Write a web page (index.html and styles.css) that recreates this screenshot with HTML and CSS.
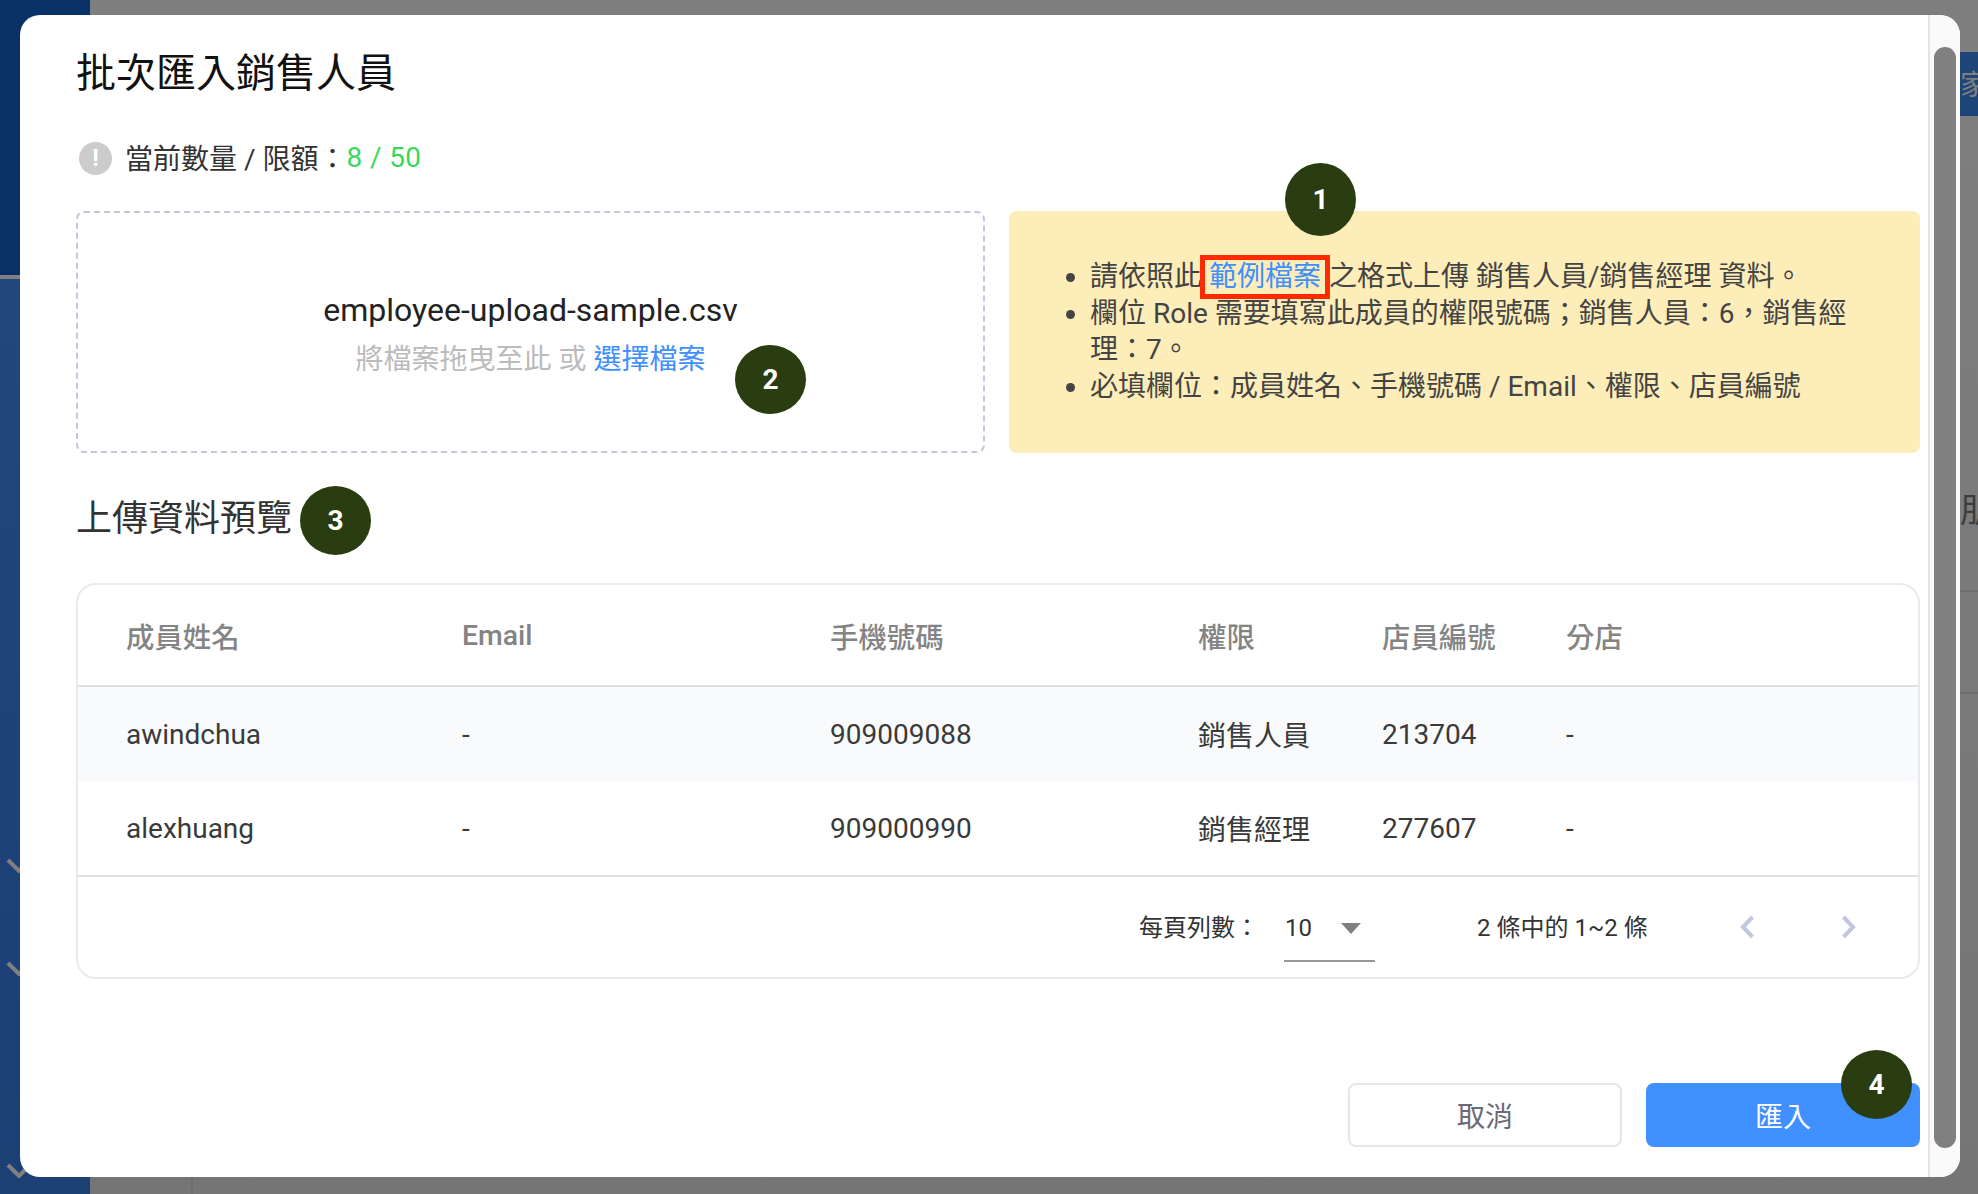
FILE: index.html
```html
<!DOCTYPE html>
<html lang="zh-Hant">
<head>
<meta charset="utf-8">
<title>批次匯入銷售人員</title>
<link rel="stylesheet" href="styles.css">
</head>
<body>
<div class="backdrop">
  <aside class="side">
    <div class="side-top"></div>
    <div class="side-bottom">
      <svg class="side-chev" viewBox="0 0 26 15"><path d="M2 2l11 11 11-11"/></svg>
      <svg class="side-chev" viewBox="0 0 26 15"><path d="M2 2l11 11 11-11"/></svg>
      <svg class="side-chev" viewBox="0 0 26 15"><path d="M2 2l11 11 11-11"/></svg>
    </div>
  </aside>
  <main class="page">
    <div class="page-nav"></div>
    <div class="page-content">
      <div class="page-tag">家</div>
      <div class="page-word">朋</div>
      <div class="page-rule"></div>
      <div class="page-rule"></div>
    </div>
  </main>
</div>

<section class="modal">
  <div class="modal-body">
    <h1 class="title">批次匯入銷售人員</h1>
    <div class="quota">
      <span class="quota-icon">!</span>
      <span>當前數量 / 限額：</span><span class="quota-num">8 / 50</span>
    </div>
    <div class="upload-row">
      <div class="drop">
        <div class="drop-file">employee-upload-sample.csv</div>
        <div class="drop-hint">將檔案拖曳至此 或 <a class="link">選擇檔案</a></div>
      </div>
      <div class="notes">
        <ul class="notes-list">
          <li>請依照此<a class="link sample">範例檔案</a>之格式上傳 銷售人員/銷售經理 資料。</li>
          <li>欄位 Role 需要填寫此成員的權限號碼；銷售人員：6，銷售經理：7。</li>
          <li>必填欄位：成員姓名、手機號碼 / Email、權限、店員編號</li>
        </ul>
      </div>
    </div>
    <h2 class="section">上傳資料預覽</h2>
    <div class="table-card">
      <table class="grid">
        <thead>
          <tr><th class="c1">成員姓名</th><th class="c2">Email</th><th class="c3">手機號碼</th><th class="c4">權限</th><th class="c5">店員編號</th><th>分店</th></tr>
        </thead>
        <tbody>
          <tr class="odd"><td>awindchua</td><td>-</td><td>909009088</td><td>銷售人員</td><td>213704</td><td>-</td></tr>
          <tr><td>alexhuang</td><td>-</td><td>909000990</td><td>銷售經理</td><td>277607</td><td>-</td></tr>
        </tbody>
      </table>
      <div class="pager">
        <span class="pager-label">每頁列數：</span>
        <div class="pager-select"><span>10</span><i class="caret"></i></div>
        <span class="pager-range">2 條中的 1~2 條</span>
        <svg class="pager-arrow prev" viewBox="0 0 15 24"><path d="M12.500 2L3 12l9.500 10"/></svg>
        <svg class="pager-arrow" viewBox="0 0 15 24"><path d="M2.500 2L12 12l-9.500 10"/></svg>
      </div>
    </div>
    <div class="actions">
      <button class="btn btn-ghost">取消</button>
      <button class="btn btn-primary">匯入</button>
    </div>
  </div>
  <div class="scrollbar"><div class="thumb"></div></div>
</section>

<span class="badge b1">1</span>
<span class="badge b2">2</span>
<span class="badge b3">3</span>
<span class="badge b4">4</span>
</body>
</html>
```
FILE: styles.css
```css
* { box-sizing: border-box; }
html, body { margin: 0; height: 100%; }
body {
  position: relative;
  width: 1978px;
  height: 1194px;
  overflow: hidden;
  font-family: Roboto, "Noto Sans CJK TC", sans-serif;
  color: #333;
}
.backdrop { display: flex; height: 100%; background: #7f7f7f; }
.side { width: 90px; display: flex; flex-direction: column; }
.side-top { height: 275px; background: #0a3068; }
.side-bottom {
  flex: 1;
  margin-top: 4px;
  background: linear-gradient(#21477c, #1c3f74);
  padding: 579px 0 0 6px;
  display: flex;
  flex-direction: column;
  gap: 88px;
}
.side-chev { width: 26px; height: 15px; fill: none; stroke: #808080; stroke-width: 4; }
.side-chev:last-child { margin-top: 99px; }
.page { flex: 1; display: flex; background: linear-gradient(#7f7f7f, #757575); }
.page-nav { width: 103px; height: 100px; margin-top: auto; border-right: 2px solid #6c6c6c; }
.page-content { flex: 1; display: flex; flex-direction: column; align-items: flex-end; padding-top: 52px; }
.page-tag {
  width: 18px; height: 64px; background: #1f4478; color: #7f7f7f;
  font-size: 28px; line-height: 68px; overflow: hidden; white-space: nowrap;
}
.page-word {
  width: 18px; margin-top: 372px; color: #3c3c3c; font-size: 34px; line-height: 44px; overflow: hidden; white-space: nowrap;
}
.page-rule { width: 100%; height: 2px; background: #6f6f6f; margin-top: 100px; }
.page-word + .page-rule { margin-top: 58px; }

.modal {
  position: absolute;
  left: 20px;
  top: 15px;
  width: 1940px;
  height: 1162px;
  background: #fff;
  border-radius: 20px;
  display: flex;
  overflow: hidden;
}
.modal-body { flex: 1; padding: 0 8px 0 56px; min-width: 0; }
.title { margin: 0; padding-top: 33px; font-size: 40px; line-height: 52px; font-weight: 400; color: #111; }
.quota { margin-top: 29px; height: 56px; display: flex; align-items: center; font-size: 28px; color: #333; }
.quota-icon {
  width: 33px; height: 33px; border-radius: 50%; background: #ccc; color: #fff;
  font-size: 24px; font-weight: 700; line-height: 33px; text-align: center; margin: 2px 13px 0 3px;
}
.quota-num { color: #3ad75f; letter-spacing: 0.4px; }
.upload-row { margin-top: 26px; display: flex; gap: 24px; height: 242px; }
.drop {
  width: 909px;
  border: 2px dashed #c2c6de;
  border-radius: 8px;
  padding-top: 6px;
  display: flex; flex-direction: column; align-items: center; justify-content: center;
}
.drop-file { font-size: 32px; line-height: 44px; color: #222; margin-top: -2px; }
.drop-hint { font-size: 28px; line-height: 44px; color: #bbb; margin-top: 6px; margin-bottom: -1px; }
.link { color: #4090ff; }
.notes { flex: 1; background: #fdedb9; border-radius: 8px; padding: 48px 66px 0 0; color: #444; }
.notes-list { margin: 0; padding: 0 0 0 81px; font-size: 28px; line-height: 36.6px; }
.sample { display: inline-block; height: 26px; line-height: 26px; outline: 5px solid #ff2a00; outline-offset: 4.5px; margin: 0 8px 0 7px; }
.section { margin: 35px 0 0; font-size: 36px; line-height: 62px; font-weight: 400; color: #333; }
.table-card {
  margin-top: 33px;
  height: 396px;
  border: 2px solid #e9eaf0;
  border-radius: 20px;
  overflow: hidden;
}
.grid { width: 100%; border-collapse: collapse; table-layout: fixed; font-size: 28px; }
.grid th, .grid td { text-align: left; padding: 0 0 0 48px; font-weight: 400; }
.grid th { height: 101px; font-size: 28.4px; color: #848484; border-bottom: 2px solid #e0e0e0; font-weight: 500; }
.grid td { height: 95px; color: #3a3a3a; }
.grid .c1 { width: 336px; }
.grid .c2 { width: 368px; }
.grid .c3 { width: 368px; }
.grid .c4 { width: 184px; }
.grid .c5 { width: 184px; }
.grid tbody tr:last-child td { border-bottom: 2px solid #e0e0e0; }
.odd td { background: #f9fafc; }
.pager { height: 99px; display: flex; align-items: center; font-size: 24px; color: #333; padding-left: 1061px; }
.pager-label { width: 145px; margin-top: -3px; }
.pager-select {
  width: 91px; height: 66px; margin-top: 4px; padding: 0 14px 0 1px;
  border-bottom: 2px solid #999; display: flex; align-items: center; justify-content: space-between;
}
.caret { width: 0; height: 0; margin-top: 1px; border-left: 10px solid transparent; border-right: 10px solid transparent; border-top: 11px solid #808080; }
.pager-range { margin-left: 102px; width: 263px; margin-top: -3px; }
.pager-arrow { width: 15px; height: 24px; fill: none; stroke: #c2c6de; stroke-width: 4; }
.pager-arrow.prev { margin-right: 86px; }
.actions { margin-top: 104px; display: flex; justify-content: flex-end; gap: 24px; }
.btn { width: 274px; height: 64px; border-radius: 8px; font: inherit; font-size: 28px; }
.btn-ghost { background: #fff; border: 2px solid #e6e6e6; color: #6a6a78; }
.btn-primary { background: #4090ff; border: 0; color: #fff; }
.scrollbar {
  width: 32px; border-left: 2px solid #e4e4e4; background: #fafafa; padding: 32px 4px 29px 4px; flex: none;
}
.thumb { height: 100%; background: #808080; border-radius: 11px; width: 22px; }

.badge {
  position: absolute; width: 71px; height: 73px; border-radius: 50%;
  background: #2a3d10; color: #fff; font-size: 28px; font-weight: 700;
  display: flex; align-items: center; justify-content: center;
}
.b1 { left: 1285px; top: 163px; }
.b2 { left: 735px; top: 345px; height: 69px; }
.b3 { left: 300px; top: 486px; height: 69px; }
.b4 { left: 1841px; top: 1050px; height: 69px; }
```
